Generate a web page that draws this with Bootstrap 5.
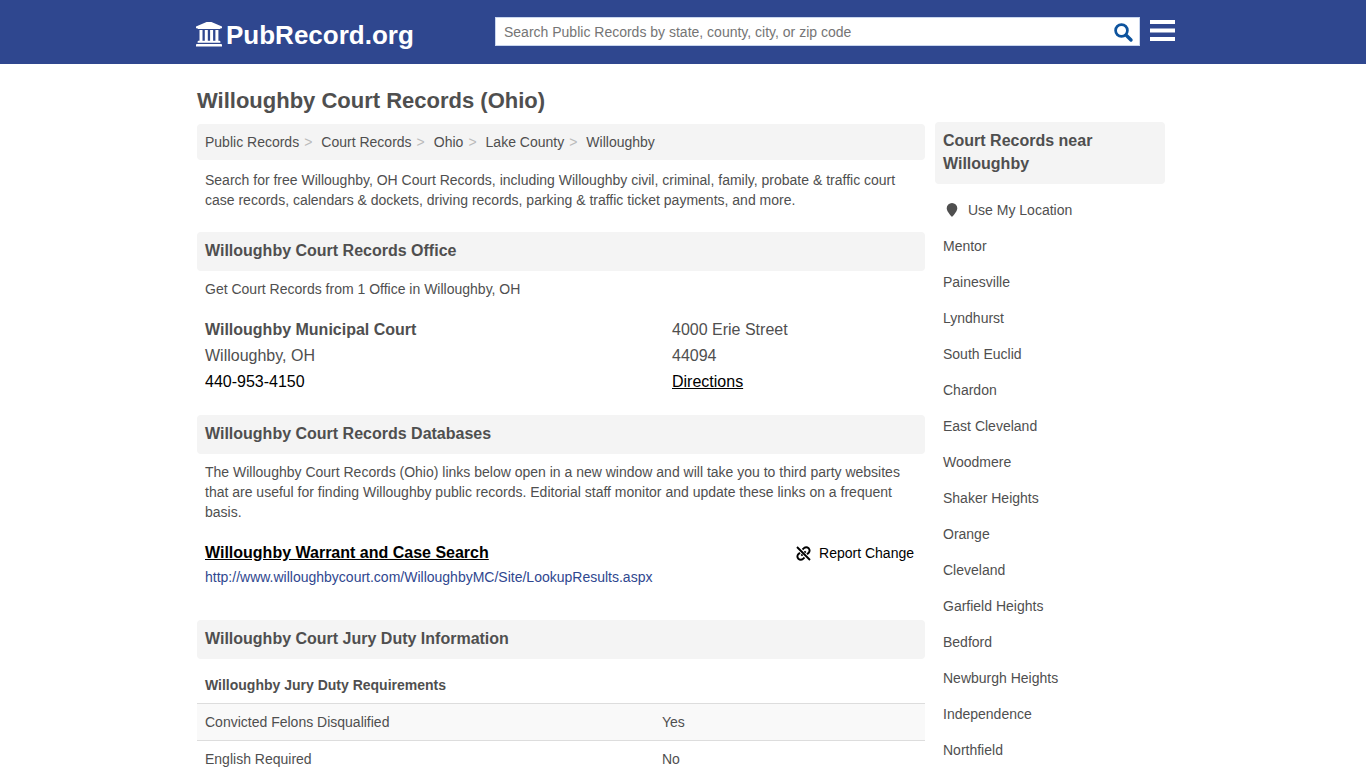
<!DOCTYPE html>
<html lang="en">
<head>
<meta charset="utf-8">
<meta name="viewport" content="width=device-width, initial-scale=1">
<title>Willoughby Court Records (Ohio)</title>
<link href="https://cdn.jsdelivr.net/npm/bootstrap@5.3.0/dist/css/bootstrap.min.css" rel="stylesheet">
<style>
  body { font-family: "Liberation Sans", Arial, sans-serif; font-size: 14px; line-height: 20px; color: #4f4f4f; }
  a { color: inherit; text-decoration: none; }
  .site-wrap { max-width: 984px; }
  .site-header { background: #2f478f; min-height: 64px; padding-bottom: 2px; }
  .brand { font-size: 26px; line-height: 32px; color: #fff; width: 300px; }
  .search-box { height: 29px; padding-top: 2px; background: #fff; border: 1px solid #c9d6ee; }
  .search-box input { font-size: 14px; line-height: 20px; color: #555; min-width: 0; }
  .search-box input::placeholder { color: #757575; opacity: 1; }
  .page-body { padding: 23px 10px 0 6px; column-gap: 10px; }
  .page-title { font-size: 22px; line-height: 28px; margin-bottom: 9px; }
  .panel-bar { background: #f4f4f4; border-radius: 4px; padding: 8px; }
  .section-title { font-size: 16px; line-height: 23px; margin: 0; padding: 7px 8px 9px; }
  .crumbs { --bs-breadcrumb-divider: ">"; --bs-breadcrumb-divider-color: #bbb; --bs-breadcrumb-font-size: 14px; --bs-breadcrumb-item-padding-x: 0; margin: 0; }
  .crumbs .breadcrumb-item + .breadcrumb-item::before { padding: 0 9px 0 5px; }
  .intro { padding: 10px 8px 0; margin-bottom: 22px; }
  .section-title + .intro { padding-top: 8px; margin-bottom: 21px; }
  .office { font-size: 16px; line-height: 26px; padding: 0 8px; margin: -3px 0 20px; }
  .office-name { flex: 0 0 467px; max-width: 66%; }
  .db-entry { padding: 0 7px 0 8px; margin-bottom: 33px; }
  .db-link { font-size: 16px; line-height: 20px; }
  .db-url { color: #2f478f; line-height: 20px; margin-top: 4px; }
  .jury { --bs-table-color: #4f4f4f; table-layout: fixed; margin: 8px 0 0; line-height: 20px; color: #4f4f4f; }
  .jury th, .jury td { padding: 8px; border: 0; border-bottom: 1px solid #ddd; }
  .jury tbody tr:nth-child(odd) td { background: #f9f9f9; }
  .jury .label-col { width: 457px; }
  .sidebar { flex: 0 0 230px; padding-top: 35px; }
  .near-list a { display: block; padding: 8px; }
  .dark { color: #000; }
  @media (max-width: 800px) {
    .page-body { flex-wrap: wrap; }
    .sidebar { flex: 1 0 100%; }
    .brand { width: auto; }
    .jury .label-col { width: 60%; }
  }
</style>
</head>
<body>
<header class="site-header d-flex align-items-center">
  <div class="site-wrap container-fluid ps-1 pe-0 d-flex align-items-center">
    <a href="#" class="brand fw-bold d-flex align-items-center flex-shrink-0 pt-2">
      <svg width="27" height="27" viewBox="0 1 27 27" fill="#fff" class="me-1" aria-hidden="true"><path d="M14 0 27 5.400V7.200h-1.500q0 .9-1 .9H3.500q-1 0-1-.9H1V5.400zM4.500 9h3v10.800h2.300V9h3v10.800h2.300V9h3v10.800h2.300V9h3v10.800h1q1 0 1 .9v1H2.600v-1q0-.9 1-.9h.9zM2 22.900h24q1 0 1 .9v1.800H1v-1.800q0-.9 1-.9z"/></svg>
      <span>PubRecord.org</span>
    </a>
    <form class="search-box d-flex flex-grow-1 align-items-center" role="search">
      <input type="text" class="flex-grow-1 border-0 bg-transparent px-2 py-0" aria-label="Search public records" placeholder="Search Public Records by state, county, city, or zip code">
      <button type="submit" class="btn p-0 border-0 d-flex me-1" aria-label="Search"><svg width="24" height="24" viewBox="0 0 24 24" fill="none" stroke="#0d539d"><circle cx="10.500" cy="10.500" r="5.900" stroke-width="2.700"/><path d="m15.500 15.500 4.500 4.500" stroke-width="3.400" stroke-linecap="round"/></svg></button>
    </form>
    <button type="button" class="btn p-0 border-0 d-flex ms-2" aria-label="Menu"><svg width="27" height="24" viewBox="0 0 27 24" fill="#fff"><path d="M2 1h25v4H2zM2 9.500h25v4H2zM2 18h25v4H2z"/></svg></button>
  </div>
</header>

<div class="site-wrap page-body container-fluid d-flex align-items-start">
  <main class="flex-grow-1">
    <h1 class="page-title fw-bold">Willoughby Court Records (Ohio)</h1>
    <nav class="panel-bar" aria-label="breadcrumb">
      <ol class="breadcrumb crumbs">
        <li class="breadcrumb-item"><a href="#">Public Records</a></li>
        <li class="breadcrumb-item"><a href="#">Court Records</a></li>
        <li class="breadcrumb-item"><a href="#">Ohio</a></li>
        <li class="breadcrumb-item"><a href="#">Lake County</a></li>
        <li class="breadcrumb-item"><a href="#">Willoughby</a></li>
      </ol>
    </nav>
    <p class="intro">Search for free Willoughby, OH Court Records, including Willoughby civil, criminal, family, probate &amp; traffic court case records, calendars &amp; dockets, driving records, parking &amp; traffic ticket payments, and more.</p>

    <h2 class="panel-bar section-title fw-bold">Willoughby Court Records Office</h2>
    <p class="intro">Get Court Records from 1 Office in Willoughby, OH</p>
    <div class="office d-flex">
      <div class="office-name">
        <div class="fw-bold">Willoughby Municipal Court</div>
        <div>Willoughby, OH</div>
        <a href="#" class="dark">440-953-4150</a>
      </div>
      <div>
        <div>4000 Erie Street</div>
        <div>44094</div>
        <a href="#" class="dark text-decoration-underline">Directions</a>
      </div>
    </div>

    <h2 class="panel-bar section-title fw-bold">Willoughby Court Records Databases</h2>
    <p class="intro">The Willoughby Court Records (Ohio) links below open in a new window and will take you to third party websites that are useful for finding Willoughby public records. Editorial staff monitor and update these links on a frequent basis.</p>
    <div class="db-entry d-flex justify-content-between align-items-start">
      <div>
        <a href="#" class="db-link dark fw-bold text-decoration-underline">Willoughby Warrant and Case Search</a>
        <div class="db-url">http://www.willoughbycourt.com/WilloughbyMC/Site/LookupResults.aspx</div>
      </div>
      <a href="#" class="dark d-flex align-items-center gap-2 pe-1"><svg width="15" height="15" viewBox="0 0 15 15" fill="none" stroke="#000" stroke-width="1.900" aria-hidden="true"><path d="M1 1l13 13M6.500 3.500 8.200 1.900Q10.500.5 12.700 2.300 14.500 4.500 12.700 6.800L11 8.300M8.500 6.500l1.200-1.200M4 6.700 2.300 8.200Q.5 10.500 2.300 12.700 4.500 14.500 6.800 13.100L8.500 11.500M5.300 9.700l1.200-1.200"/></svg>Report Change</a>
    </div>

    <h2 class="panel-bar section-title fw-bold">Willoughby Court Jury Duty Information</h2>
    <table class="table jury">
      <colgroup><col class="label-col"><col></colgroup>
      <thead><tr><th colspan="2">Willoughby Jury Duty Requirements</th></tr></thead>
      <tbody>
        <tr><td>Convicted Felons Disqualified</td><td>Yes</td></tr>
        <tr><td>English Required</td><td>No</td></tr>
      </tbody>
    </table>
  </main>

  <aside class="sidebar">
    <h2 class="panel-bar section-title fw-bold mb-2">Court Records near Willoughby</h2>
    <ul class="near-list list-unstyled mb-0">
      <li><a href="#" class="d-flex align-items-center"><svg width="17" height="16" viewBox="0 0 17 16" fill="#4f4f4f" class="me-2" aria-hidden="true"><path d="M9 1a5.300 5.300 0 0 1 5.300 5.300C14.300 9 11 13 9 15 7 13 3.700 9 3.700 6.300A5.300 5.300 0 0 1 9 1z"/></svg>Use My Location</a></li>
      <li><a href="#">Mentor</a></li>
      <li><a href="#">Painesville</a></li>
      <li><a href="#">Lyndhurst</a></li>
      <li><a href="#">South Euclid</a></li>
      <li><a href="#">Chardon</a></li>
      <li><a href="#">East Cleveland</a></li>
      <li><a href="#">Woodmere</a></li>
      <li><a href="#">Shaker Heights</a></li>
      <li><a href="#">Orange</a></li>
      <li><a href="#">Cleveland</a></li>
      <li><a href="#">Garfield Heights</a></li>
      <li><a href="#">Bedford</a></li>
      <li><a href="#">Newburgh Heights</a></li>
      <li><a href="#">Independence</a></li>
      <li><a href="#">Northfield</a></li>
    </ul>
  </aside>
</div>
<script src="https://cdn.jsdelivr.net/npm/bootstrap@5.3.0/dist/js/bootstrap.bundle.min.js"></script>
</body>
</html>
